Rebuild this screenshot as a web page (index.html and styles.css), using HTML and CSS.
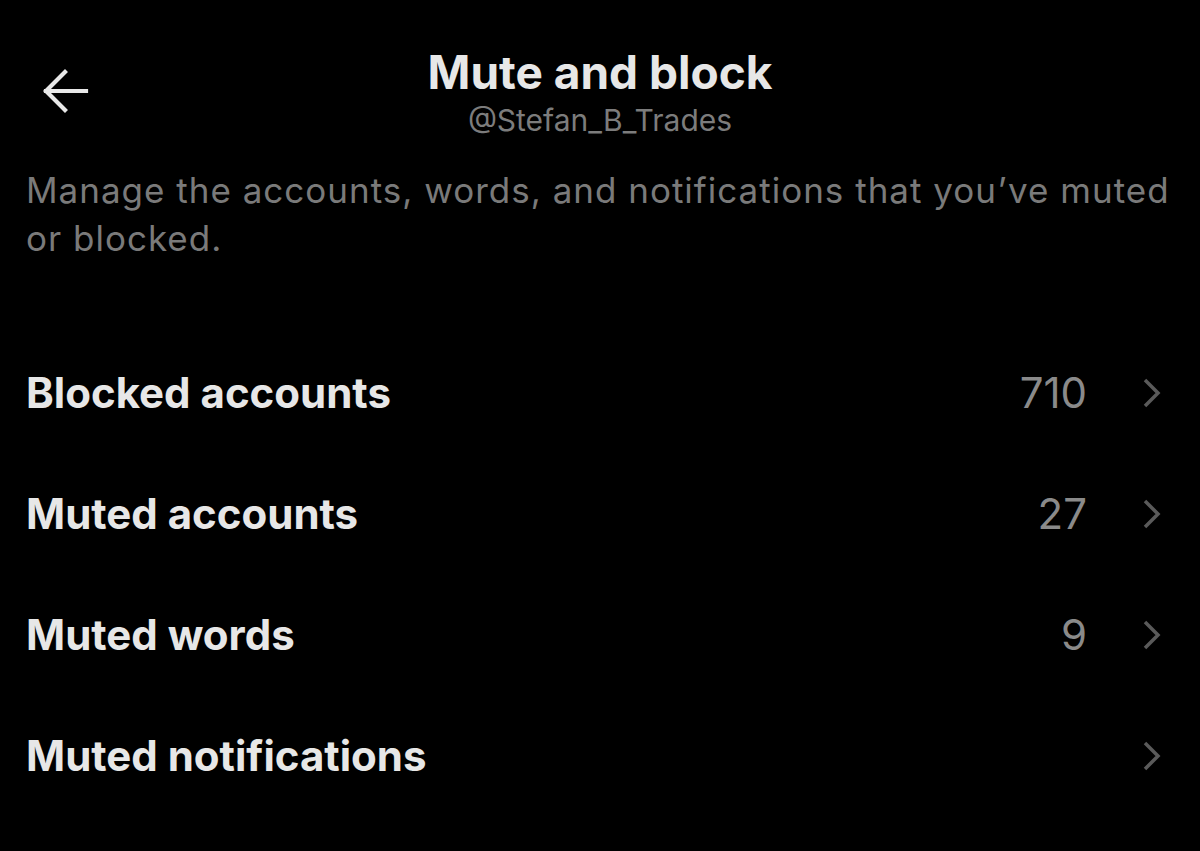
FILE: index.html
```html
<!DOCTYPE html>
<html lang="en">
<head>
<meta charset="utf-8">
<title>Mute and block</title>
<link rel="stylesheet" href="styles.css">
</head>
<body>
<div class="screen">
  <header class="header">
    <button class="back" aria-label="Back">
      <svg width="50" height="44" viewBox="0 0 50 44" fill="none" stroke="#e8e8e8" stroke-width="4.2" stroke-linecap="square" stroke-linejoin="miter">
        <path d="M5 22 H45"/>
        <path d="M24 3 L5 22 L24 41"/>
      </svg>
    </button>
    <div class="titles">
      <h1 class="title">Mute and block</h1>
      <div class="handle">@Stefan_B_Trades</div>
    </div>
  </header>
  <p class="desc">Manage the accounts, words, and notifications that you’ve muted or blocked.</p>
  <ul class="list">
    <li class="row"><span class="label">Blocked accounts</span><span class="count">710</span><span class="chev"><svg width="20" height="30" viewBox="0 0 20 30" fill="none" stroke="#5a5a5a" stroke-width="3.5"><path d="M3 2 L16 15 L3 28"/></svg></span></li>
    <li class="row"><span class="label">Muted accounts</span><span class="count">27</span><span class="chev"><svg width="20" height="30" viewBox="0 0 20 30" fill="none" stroke="#5a5a5a" stroke-width="3.5"><path d="M3 2 L16 15 L3 28"/></svg></span></li>
    <li class="row"><span class="label">Muted words</span><span class="count">9</span><span class="chev"><svg width="20" height="30" viewBox="0 0 20 30" fill="none" stroke="#5a5a5a" stroke-width="3.5"><path d="M3 2 L16 15 L3 28"/></svg></span></li>
    <li class="row"><span class="label">Muted notifications</span><span class="count"></span><span class="chev"><svg width="20" height="30" viewBox="0 0 20 30" fill="none" stroke="#5a5a5a" stroke-width="3.5"><path d="M3 2 L16 15 L3 28"/></svg></span></li>
  </ul>
</div>
</body>
</html>
```
FILE: styles.css
```css
html, body {
  margin: 0;
  padding: 0;
  background: #000;
}
body {
  font-family: Inter, "Noto Sans", "Liberation Sans", sans-serif;
  color: #e7e7e7;
  width: 1200px;
  height: 851px;
  overflow: hidden;
}
.screen {
  display: flex;
  flex-direction: column;
}
.header {
  position: relative;
  height: 150px;
  display: flex;
  justify-content: center;
}
.back {
  position: absolute;
  left: 41px;
  top: 69px;
  background: none;
  border: 0;
  padding: 0;
  line-height: 0;
}
.titles {
  display: flex;
  flex-direction: column;
  align-items: center;
  padding-top: 43px;
}
.title {
  margin: 0;
  font-size: 46px;
  font-weight: 700;
  line-height: 58px;
  color: #e7e7e7;
}
.handle {
  font-size: 30px;
  line-height: 40px;
  color: #7c7c7c;
  margin-top: -1px;
}
.desc {
  margin: 16px 0 0;
  padding: 0 20px 0 26px;
  font-size: 35px;
  letter-spacing: 1px;
  line-height: 48px;
  color: #7a7a7a;
}
.list {
  list-style: none;
  margin: 0;
  padding: 0;
  margin-top: 70px;
}
.row {
  display: flex;
  align-items: center;
  height: 121px;
  padding: 0 38px 0 26px;
}
.label {
  flex: 1;
  font-size: 42px;
  font-weight: 700;
  color: #e7e7e7;
}
.count {
  font-size: 42px;
  color: #8a8a8a;
  margin-right: 55px;
}
.chev {
  display: flex;
  line-height: 0;
}
```
